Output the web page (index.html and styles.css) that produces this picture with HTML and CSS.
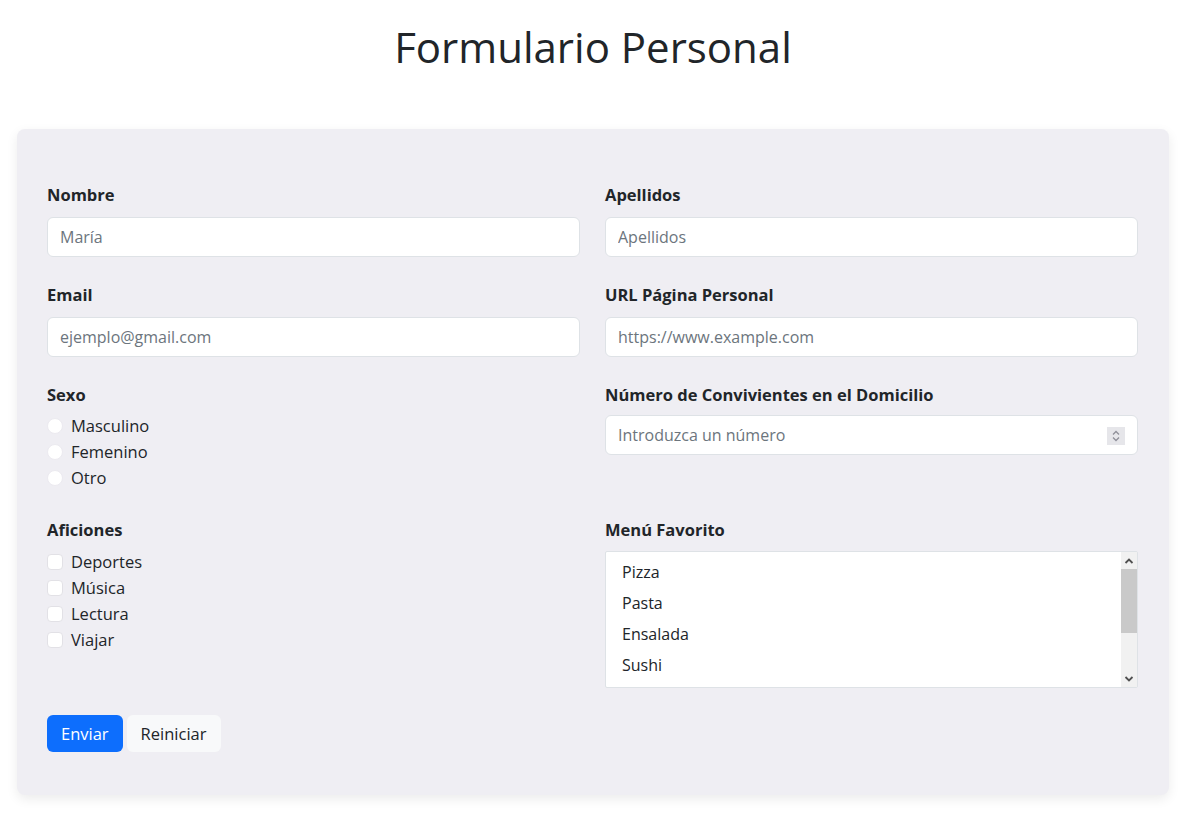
FILE: index.html
```html
<!DOCTYPE html>
<html lang="es">
<head>
<meta charset="utf-8">
<title>Formulario Personal</title>
<link rel="stylesheet" href="styles.css">
</head>
<body>
<h1 class="title">Formulario Personal</h1>
<form class="card">
  <div class="grid">
    <div class="field">
      <label class="label" for="nombre">Nombre</label>
      <input class="input" id="nombre" type="text" placeholder="María">
    </div>
    <div class="field">
      <label class="label" for="apellidos">Apellidos</label>
      <input class="input" id="apellidos" type="text" placeholder="Apellidos">
    </div>
    <div class="field">
      <label class="label" for="email">Email</label>
      <input class="input" id="email" type="email" placeholder="ejemplo@gmail.com">
    </div>
    <div class="field">
      <label class="label" for="url">URL Página Personal</label>
      <input class="input" id="url" type="url" placeholder="https://www.example.com">
    </div>
    <div class="field radios">
      <span class="label">Sexo</span>
      <label class="check"><span class="radio"></span>Masculino</label>
      <label class="check"><span class="radio"></span>Femenino</label>
      <label class="check"><span class="radio"></span>Otro</label>
    </div>
    <div class="field">
      <label class="label tight" for="num">Número de Convivientes en el Domicilio</label>
      <div class="num-wrap">
        <input class="input number" id="num" type="number" placeholder="Introduzca un número">
        <span class="spinner">
          <svg width="10" height="14" viewBox="0 0 10 14"><path d="M2 5.5 5 2.5 8 5.5M2 8.5 5 11.5 8 8.5" fill="none" stroke="#8f8f99" stroke-width="1.3"/></svg>
        </span>
      </div>
    </div>
    <div class="field boxes">
      <span class="label">Aficiones</span>
      <label class="check"><span class="box"></span>Deportes</label>
      <label class="check"><span class="box"></span>Música</label>
      <label class="check"><span class="box"></span>Lectura</label>
      <label class="check"><span class="box"></span>Viajar</label>
    </div>
    <div class="field">
      <span class="label mid">Menú Favorito</span>
      <div class="listbox">
        <div class="options">
          <div class="option">Pizza</div>
          <div class="option">Pasta</div>
          <div class="option">Ensalada</div>
          <div class="option">Sushi</div>
        </div>
        <div class="scrollbar">
          <span class="arrow"><svg width="10" height="8" viewBox="0 0 10 8"><path d="M1.5 6 5 2.5 8.5 6" fill="none" stroke="#505050" stroke-width="1.8"/></svg></span>
          <span class="track"><span class="thumb"></span></span>
          <span class="arrow"><svg width="10" height="8" viewBox="0 0 10 8"><path d="M1.5 2 5 5.5 8.5 2" fill="none" stroke="#505050" stroke-width="1.8"/></svg></span>
        </div>
      </div>
    </div>
  </div>
  <div class="actions">
    <button type="button" class="btn primary">Enviar</button>
    <button type="reset" class="btn light">Reiniciar</button>
  </div>
</form>
</body>
</html>
```
FILE: styles.css
```css
* { box-sizing: border-box; }
body {
  margin: 0;
  padding: 0 18px 20px 17px;
  font-family: "Open Sans", Lato, sans-serif;
  color: #212529;
  background: #fff;
}
.title {
  margin: 22px 0 58px;
  text-align: center;
  font-weight: 400;
  font-size: 42px;
  line-height: 49px;
  color: #212529;
}
.card {
  background: #efeef3;
  border-radius: 8px;
  box-shadow: 0 4px 12px rgba(0,0,0,0.08);
  padding: 54px 31px 43px 30px;
}
.grid {
  display: grid;
  grid-template-columns: 1fr 1fr;
  column-gap: 25px;
  row-gap: 26px;
}
.grid > .field:nth-child(n+7) { margin-top: 1px; }
.field {
  display: flex;
  flex-direction: column;
}
.label {
  font-weight: 700;
  font-size: 16.5px;
  line-height: 24px;
  margin-bottom: 10px;
}
.label.tight { margin-bottom: 8px; }
.label.mid { margin-bottom: 9px; }
.input {
  width: 100%;
  height: 40px;
  border: 1px solid #dee2e6;
  border-radius: 6px;
  background: #fff;
  padding: 0 12px;
  font-family: inherit;
  font-size: 16px;
  color: #212529;
}
.input::placeholder { color: #6c757d; }
.num-wrap {
  position: relative;
}
.number { -moz-appearance: textfield; }
.number::-webkit-inner-spin-button,
.number::-webkit-outer-spin-button { -webkit-appearance: none; margin: 0; }
.spinner {
  position: absolute;
  right: 13px;
  top: 12px;
  width: 18px;
  height: 18px;
  background: #e6e6ea;
  display: flex;
  align-items: center;
  justify-content: center;
}
.check {
  display: flex;
  align-items: center;
  gap: 8px;
  font-size: 16.5px;
  line-height: 26px;
  height: 26px;
}
.radios .label + .check { margin-top: -4px; }
.boxes .label + .check { margin-top: -3px; }
.radio {
  width: 16px;
  height: 16px;
  border-radius: 50%;
  background: #fff;
  border: 1px solid #eceaf0;
}
.box {
  width: 16px;
  height: 16px;
  border-radius: 4px;
  background: #fff;
  border: 1px solid #e2e1e6;
}
.listbox {
  height: 137px;
  display: flex;
  background: #fff;
  border: 1px solid #dee2e6;
  border-radius: 2px;
}
.options {
  flex: 1;
  padding: 5px 0;
}
.option {
  padding: 0 16px;
  font-size: 16px;
  line-height: 31px;
}
.scrollbar {
  width: 16px;
  display: flex;
  flex-direction: column;
  background: #f1f1f1;
}
.arrow {
  height: 17px;
  display: flex;
  align-items: center;
  justify-content: center;
}
.track {
  flex: 1;
  display: flex;
  flex-direction: column;
}
.thumb {
  height: 64px;
  background: #c9c9c9;
}
.actions {
  display: flex;
  gap: 4px;
  margin-top: 27px;
}
.btn {
  height: 37px;
  border: none;
  border-radius: 6px;
  font-family: inherit;
  font-size: 16.5px;
  padding: 0 14px;
}
.primary { background: #0d6efd; color: #fff; }
.light { background: #f8f9fa; color: #212529; }
```
